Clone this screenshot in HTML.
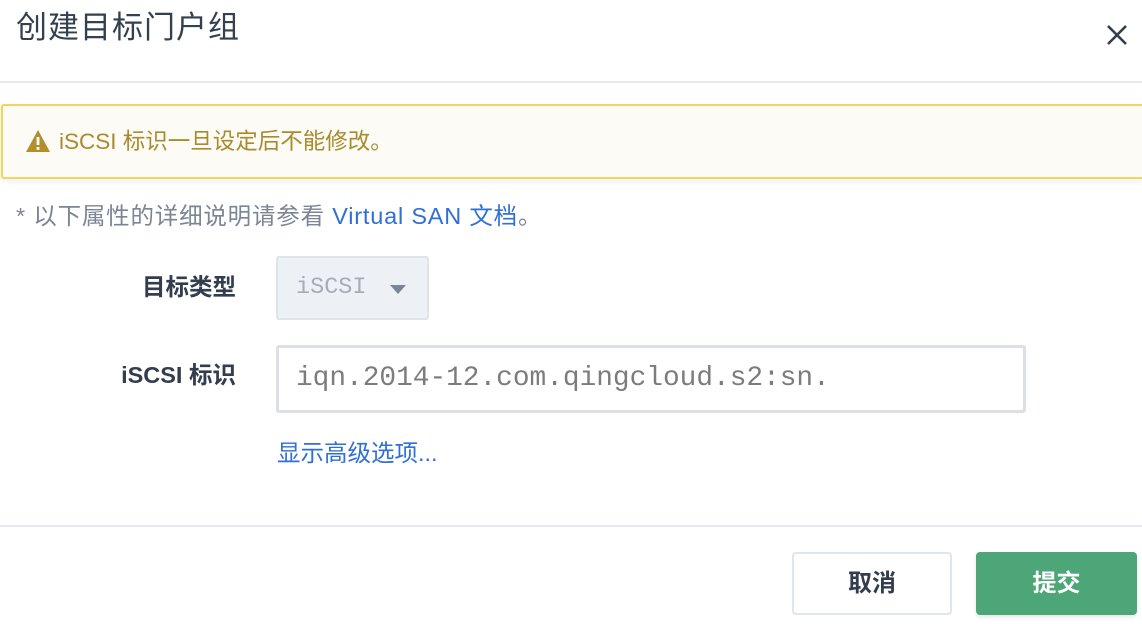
<!DOCTYPE html>
<html><head><meta charset="utf-8"><style>
*{margin:0;padding:0;box-sizing:border-box}
body{width:1142px;height:624px;background:#fff;position:relative;overflow:hidden;font-family:"Liberation Sans","Noto Sans CJK SC",sans-serif;color:#333d4e}
.a{position:absolute;white-space:nowrap}
</style></head><body>
<div class="a" style="left:16px;top:8px;font-size:31px;line-height:40px;color:#33404f;letter-spacing:1px">创建目标门户组</div>
<svg class="a" style="left:1105px;top:23px" width="24" height="24" viewBox="0 0 24 24"><path d="M3 3L21 21M21 3L3 21" stroke="#333d4e" stroke-width="2.6" fill="none"/></svg>
<div class="a" style="left:0;top:81px;width:1142px;height:2px;background:#e6e9ee"></div>
<div class="a" style="left:1px;top:104px;width:1145px;height:75px;background:#fcfbf6;border:2px solid #f6d35e;border-radius:3px;box-shadow:0 3px 6px rgba(0,0,0,0.06)"></div>
<svg class="a" style="left:25px;top:129px" width="26" height="24" viewBox="0 0 26 24"><path d="M13 1L25 23H1Z" fill="#b38f2c"/><rect x="11.6" y="8" width="2.8" height="8" fill="#fff"/><rect x="11.6" y="18" width="2.8" height="2.8" fill="#fff"/></svg>
<div class="a" style="left:59px;top:127px;font-size:22.5px;line-height:30px;color:#a98b2e">iSCSI 标识一旦设定后不能修改。</div>
<div class="a" style="left:16px;top:201px;font-size:23.5px;line-height:30px;color:#7b8594;letter-spacing:0.8px">* 以下属性的详细说明请参看 <span style="color:#2f6fd6">Virtual SAN 文档</span>。</div>
<div class="a" style="left:96px;top:272px;width:140px;text-align:right;font-size:23.5px;line-height:30px;color:#333d4e;font-weight:bold">目标类型</div>
<div class="a" style="left:276px;top:256px;width:153px;height:64px;background:#edf0f5;border:2px solid #dfe3ea;border-radius:3px"></div>
<div class="a" style="left:296px;top:273px;font-family:'Liberation Mono',monospace;font-size:23.5px;line-height:30px;color:#a7adb6">iSCSI</div>
<svg class="a" style="left:390px;top:285px" width="16" height="10"><path d="M0 0H16L8 9Z" fill="#7c8593"/></svg>
<div class="a" style="left:96px;top:360px;width:140px;text-align:right;font-size:23.5px;line-height:30px;font-weight:bold">iSCSI 标识</div>
<div class="a" style="left:276px;top:345px;width:750px;height:68px;background:#fff;border:3px solid #dbdfe6;border-radius:3px"></div>
<div class="a" style="left:296px;top:361px;font-family:'Liberation Mono',monospace;font-size:27.8px;line-height:36px;color:#7c7c7c">iqn.2014-12.com.qingcloud.s2:sn.</div>
<div class="a" style="left:277px;top:438px;font-size:23.5px;line-height:30px;color:#2f6fd6">显示高级选项...</div>
<div class="a" style="left:0;top:525px;width:1142px;height:2px;background:#e6e9ee"></div>
<div class="a" style="left:792px;top:552px;width:160px;height:63px;border:2px solid #e1e5ec;border-radius:4px;background:#fff;text-align:center;line-height:59px;font-size:24px;font-weight:bold;color:#333d4e">取消</div>
<div class="a" style="left:976px;top:552px;width:161px;height:63px;border-radius:4px;background:#4da678;text-align:center;line-height:63px;font-size:24px;font-weight:bold;color:#fff;box-shadow:0 2px 5px rgba(0,0,0,0.1)">提交</div>
</body></html>
